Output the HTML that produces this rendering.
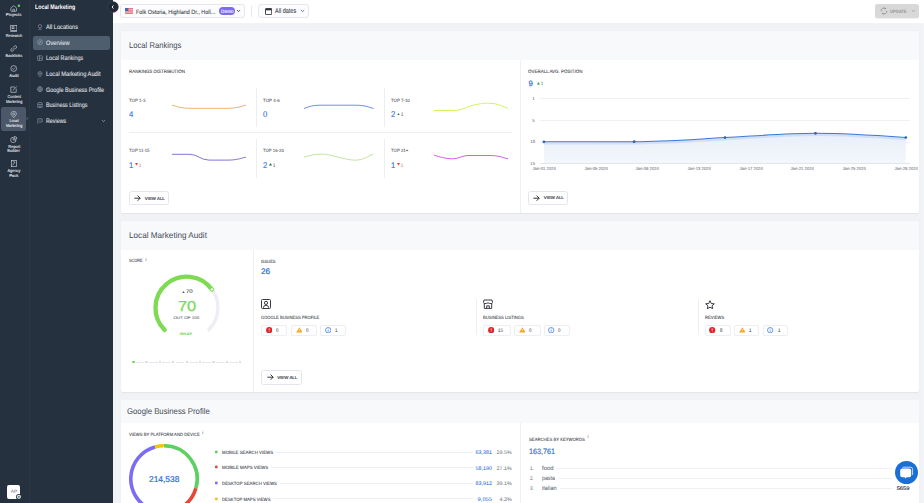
<!DOCTYPE html><html><head><meta charset="utf-8"><style>
html,body{margin:0;padding:0;width:924px;height:503px;overflow:hidden;position:relative;font-family:"Liberation Sans",sans-serif}
.a{position:absolute;white-space:nowrap;line-height:1;text-rendering:geometricPrecision}
</style></head><body>
<div style="position:absolute;left:0px;top:0px;width:924px;height:503px;background:#f0f2f6"></div>
<div style="position:absolute;left:113px;top:0px;width:811px;height:23px;background:#fff"></div>
<div style="position:absolute;left:921.4px;top:23px;width:2.6px;height:480px;background:#f3f4f7"></div>
<div style="position:absolute;left:0px;top:0px;width:29px;height:503px;background:#25313e"></div>
<div style="position:absolute;left:29px;top:0px;width:1.2px;height:503px;background:#2b3543"></div>
<div style="position:absolute;left:30.2px;top:0px;width:82.8px;height:503px;background:#25313e"></div>
<div style="position:absolute;left:1.2px;top:107.1px;width:25px;height:23.9px;background:#4c5869;border-radius:2.5px"></div>
<svg style="position:absolute;left:25.5px;top:116px" width="3" height="5" viewBox="0 0 3 5"><path d="M0.5 0.5 L2.6 2.5 L0.5 4.5 Z" fill="#4c5869"/></svg>
<div class="a" style="left:6.33px;transform-origin:50% 0;transform:scaleX(1.0237);top:13.00px;font-size:4.2px;color:#f4f6fa;font-weight:400;-webkit-text-stroke:0.06px #f4f6fa;">Projects</div>
<div class="a" style="left:4.94px;transform-origin:50% 0;transform:scaleX(0.9151);top:33.70px;font-size:4.2px;color:#f4f6fa;font-weight:400;-webkit-text-stroke:0.06px #f4f6fa;">Research</div>
<div class="a" style="left:5.06px;transform-origin:50% 0;transform:scaleX(0.9385);top:53.80px;font-size:4.2px;color:#f4f6fa;font-weight:400;-webkit-text-stroke:0.06px #f4f6fa;">Backlinks</div>
<div class="a" style="left:9.13px;transform-origin:50% 0;top:74.20px;font-size:4.2px;color:#f4f6fa;font-weight:400;-webkit-text-stroke:0.06px #f4f6fa;">Audit</div>
<div class="a" style="left:6.56px;transform-origin:50% 0;transform:scaleX(0.9201);top:94.60px;font-size:4.2px;color:#f4f6fa;font-weight:400;-webkit-text-stroke:0.06px #f4f6fa;">Content</div>
<div class="a" style="left:4.70px;transform-origin:50% 0;transform:scaleX(0.8972);top:99.50px;font-size:4.2px;color:#f4f6fa;font-weight:400;-webkit-text-stroke:0.06px #f4f6fa;">Marketing</div>
<div class="a" style="left:8.89px;transform-origin:50% 0;transform:scaleX(0.9186);top:119.30px;font-size:4.2px;color:#f4f6fa;font-weight:400;-webkit-text-stroke:0.06px #f4f6fa;">Local</div>
<div class="a" style="left:4.70px;transform-origin:50% 0;transform:scaleX(0.8972);top:123.80px;font-size:4.2px;color:#f4f6fa;font-weight:400;-webkit-text-stroke:0.06px #f4f6fa;">Marketing</div>
<div class="a" style="left:7.61px;transform-origin:50% 0;transform:scaleX(0.9540);top:144.70px;font-size:4.2px;color:#f4f6fa;font-weight:400;-webkit-text-stroke:0.06px #f4f6fa;">Report</div>
<div class="a" style="left:7.38px;transform-origin:50% 0;transform:scaleX(0.9581);top:149.40px;font-size:4.2px;color:#f4f6fa;font-weight:400;-webkit-text-stroke:0.06px #f4f6fa;">Builder</div>
<div class="a" style="left:6.92px;transform-origin:50% 0;transform:scaleX(0.9306);top:169.30px;font-size:4.2px;color:#f4f6fa;font-weight:400;-webkit-text-stroke:0.06px #f4f6fa;">Agency</div>
<div class="a" style="left:9.24px;transform-origin:50% 0;transform:scaleX(0.9664);top:173.70px;font-size:4.2px;color:#f4f6fa;font-weight:400;-webkit-text-stroke:0.06px #f4f6fa;">Pack</div>
<svg style="position:absolute;left:9.9px;top:4.6px" width="7.5" height="7" viewBox="0 0 7.5 7"><path d="M0.9 3.3 Q0.9 2.8 1.3 2.5 L3.2 1 Q3.7 0.6 4.2 1 L6.1 2.5 Q6.5 2.8 6.5 3.3 V5.8 Q6.5 6.3 6 6.3 H1.4 Q0.9 6.3 0.9 5.8 Z" fill="none" stroke="#cfd4dc" stroke-width="0.65"/><path d="M2.9 6.3 V4.6 Q2.9 4.1 3.7 4.1 Q4.5 4.1 4.5 4.6 V6.3" fill="none" stroke="#cfd4dc" stroke-width="0.65"/></svg>
<svg style="position:absolute;left:16px;top:3px" width="6" height="6" viewBox="0 0 6 6"><circle cx="2.9" cy="2.7" r="1.25" fill="#5fcf6a"/></svg>
<svg style="position:absolute;left:9.8px;top:24.8px" width="7.6" height="7" viewBox="0 0 7.6 7"><rect x="0.7" y="0.6" width="6.2" height="4.9" fill="none" stroke="#cfd4dc" stroke-width="0.65"/><path d="M0.2 6.5 H7.4" fill="none" stroke="#cfd4dc" stroke-width="0.65"/><rect x="2.1" y="1.8" width="1.9" height="1.9" fill="none" stroke="#cfd4dc" stroke-width="0.65"/></svg>
<svg style="position:absolute;left:10px;top:45px" width="7.5" height="7" viewBox="0 0 7.5 7"><path d="M3.2 2.4 L4.4 1.1 Q5.4 0.3 6.3 1.1 Q7 2 6.2 3 L5 4.2 M4.2 4.6 L3 5.9 Q2 6.7 1.1 5.9 Q0.4 5 1.2 4 L2.4 2.8 M2.8 4.6 L4.6 2.8" fill="none" stroke="#cfd4dc" stroke-width="0.65"/></svg>
<svg style="position:absolute;left:10px;top:65px" width="7.5" height="7" viewBox="0 0 7.5 7"><circle cx="3.75" cy="3.5" r="2.9" fill="none" stroke="#cfd4dc" stroke-width="0.65"/><path d="M2.4 3.6 L3.4 4.5 L5.1 2.6" fill="none" stroke="#cfd4dc" stroke-width="0.65"/></svg>
<svg style="position:absolute;left:10px;top:86.2px" width="7.5" height="7" viewBox="0 0 7.5 7"><path d="M5 1 H0.8 V6.3 H6.2 V2.6" fill="none" stroke="#cfd4dc" stroke-width="0.65"/><path d="M2.8 4.3 L6.8 0.5" fill="none" stroke="#cfd4dc" stroke-width="0.65"/></svg>
<svg style="position:absolute;left:10px;top:111.2px" width="7.5" height="7" viewBox="0 0 7.5 7"><path d="M3.75 6.6 L1.3 3.7 Q0.4 0.7 3.75 0.4 Q7.1 0.7 6.2 3.7 Z" fill="none" stroke="#cfd4dc" stroke-width="0.65"/><circle cx="3.75" cy="2.9" r="1" fill="none" stroke="#cfd4dc" stroke-width="0.65"/></svg>
<svg style="position:absolute;left:10px;top:136px" width="7.5" height="7" viewBox="0 0 7.5 7"><path d="M3.2 1.2 A2.7 2.7 0 1 0 6 4 H3.2 Z" fill="none" stroke="#cfd4dc" stroke-width="0.65"/><path d="M4.3 0.4 A2.5 2.5 0 0 1 6.9 3 H4.3 Z" fill="none" stroke="#cfd4dc" stroke-width="0.65"/></svg>
<svg style="position:absolute;left:10px;top:160.2px" width="7.5" height="7" viewBox="0 0 7.5 7"><rect x="1.3" y="0.4" width="5" height="6.3" fill="none" stroke="#cfd4dc" stroke-width="0.65"/><path d="M2.5 5.3 L5.1 2.1 M2.8 1.8 H4.8" fill="none" stroke="#cfd4dc" stroke-width="0.65"/></svg>
<div style="position:absolute;left:7.3px;top:485.1px;width:13px;height:13.8px;background:#fff;border-radius:2px"></div>
<div class="a" style="left:10.83px;transform-origin:50% 0;transform:scaleX(1.0748);top:490.14px;font-size:4.6px;color:#7a7592;font-weight:400;font-style:italic-webkit-text-stroke:0.1px #7a7592;">AP</div>
<svg style="position:absolute;left:14.5px;top:493.4px" width="8" height="8" viewBox="0 0 8 8"><circle cx="3.9" cy="3.8" r="2.9" fill="#25303d"/><circle cx="3.9" cy="3.8" r="2.1" fill="#dfe2e7"/><circle cx="3.9" cy="3.8" r="0.9" fill="#5b6470"/></svg>
<div class="a" style="left:34.90px;transform-origin:0 0;transform:scaleX(0.8283);top:5.31px;font-size:6.4px;color:#ffffff;font-weight:700;">Local Marketing</div>
<div style="position:absolute;left:32.8px;top:35.9px;width:77.1px;height:13.9px;background:#4f5e6e;border-radius:2.5px"></div>
<div class="a" style="left:45.70px;transform-origin:0 0;transform:scaleX(0.8682);top:25.13px;font-size:6.5px;color:#e8ebf0;font-weight:400;-webkit-text-stroke:0.05px #e8ebf0;">All Locations</div>
<div class="a" style="left:45.70px;transform-origin:0 0;transform:scaleX(0.8710);top:40.80px;font-size:6.5px;color:#e8ebf0;font-weight:400;-webkit-text-stroke:0.05px #e8ebf0;">Overview</div>
<div class="a" style="left:45.70px;transform-origin:0 0;transform:scaleX(0.8368);top:56.47px;font-size:6.5px;color:#e8ebf0;font-weight:400;-webkit-text-stroke:0.05px #e8ebf0;">Local Rankings</div>
<div class="a" style="left:45.70px;transform-origin:0 0;transform:scaleX(0.8784);top:72.14px;font-size:6.5px;color:#e8ebf0;font-weight:400;-webkit-text-stroke:0.05px #e8ebf0;">Local Marketing Audit</div>
<div class="a" style="left:45.70px;transform-origin:0 0;transform:scaleX(0.8375);top:87.81px;font-size:6.5px;color:#e8ebf0;font-weight:400;-webkit-text-stroke:0.05px #e8ebf0;">Google Business Profile</div>
<div class="a" style="left:45.70px;transform-origin:0 0;transform:scaleX(0.8241);top:103.48px;font-size:6.5px;color:#e8ebf0;font-weight:400;-webkit-text-stroke:0.05px #e8ebf0;">Business Listings</div>
<div class="a" style="left:45.70px;transform-origin:0 0;transform:scaleX(0.8224);top:119.15px;font-size:6.5px;color:#e8ebf0;font-weight:400;-webkit-text-stroke:0.05px #e8ebf0;">Reviews</div>
<svg style="position:absolute;left:36.6px;top:23.70px" width="6" height="6.4" viewBox="0 0 6 6.4"><circle cx="3" cy="2.2" r="1.7" fill="none" stroke="#97a0ac" stroke-width="0.6"/><path d="M3 3.9 V5.6 M1 5.9 H5" fill="none" stroke="#97a0ac" stroke-width="0.6"/></svg>
<svg style="position:absolute;left:36.6px;top:39.37px" width="6" height="6.4" viewBox="0 0 6 6.4"><circle cx="3" cy="3.2" r="2.5" fill="none" stroke="#97a0ac" stroke-width="0.6"/><path d="M1.9 4.3 L2.5 2.6 L4.2 2 L3.6 3.7 Z" fill="none" stroke="#97a0ac" stroke-width="0.6"/></svg>
<svg style="position:absolute;left:36.6px;top:55.04px" width="6" height="6.4" viewBox="0 0 6 6.4"><rect x="0.6" y="0.8" width="4.8" height="4.8" rx="0.6" fill="none" stroke="#97a0ac" stroke-width="0.6"/><path d="M2.4 0.8 V5.6 M2.4 3.2 H5.4" fill="none" stroke="#97a0ac" stroke-width="0.6"/></svg>
<svg style="position:absolute;left:36.6px;top:70.71px" width="6" height="6.4" viewBox="0 0 6 6.4"><path d="M3 6 L1.1 3.4 Q0.4 0.6 3 0.5 Q5.6 0.6 4.9 3.4 Z" fill="none" stroke="#97a0ac" stroke-width="0.6"/><circle cx="3" cy="2.6" r="0.8" fill="none" stroke="#97a0ac" stroke-width="0.6"/></svg>
<svg style="position:absolute;left:36.6px;top:86.38px" width="6" height="6.4" viewBox="0 0 6 6.4"><circle cx="3" cy="3.2" r="2.5" fill="none" stroke="#97a0ac" stroke-width="0.6"/><ellipse cx="3" cy="3.2" rx="1" ry="2.5" fill="none" stroke="#97a0ac" stroke-width="0.6"/><path d="M0.5 3.2 H5.5" fill="none" stroke="#97a0ac" stroke-width="0.6"/></svg>
<svg style="position:absolute;left:36.6px;top:102.05px" width="6" height="6.4" viewBox="0 0 6 6.4"><rect x="0.8" y="0.6" width="4.4" height="5.2" rx="0.6" fill="none" stroke="#97a0ac" stroke-width="0.6"/><path d="M0.8 2.4 H5.2 M2.2 5.8 V4 H3.8 V5.8" fill="none" stroke="#97a0ac" stroke-width="0.6"/></svg>
<svg style="position:absolute;left:36.6px;top:117.72px" width="6" height="6.4" viewBox="0 0 6 6.4"><path d="M0.8 5.6 V0.8 H5.2 V4 H1.8" fill="none" stroke="#97a0ac" stroke-width="0.6"/><path d="M3 1.8 V2.8" fill="none" stroke="#97a0ac" stroke-width="0.6"/></svg>
<svg style="position:absolute;left:101.3px;top:118.6px" width="5" height="4" viewBox="0 0 5 4"><path d="M0.8 1 L2.5 2.6 L4.2 1" fill="none" stroke="#a9b1bd" stroke-width="0.7"/></svg>
<div style="position:absolute;left:107.7px;top:1.6px;width:10px;height:10px;border-radius:50%;background:#202a36;box-shadow:0 0 0 0.7px #3a4453"></div>
<svg style="position:absolute;left:109.6px;top:3.6px" width="6" height="6" viewBox="0 0 6 6"><path d="M3.4 1.4 L2.1 3 L3.4 4.6" fill="none" stroke="#ffffff" stroke-width="0.9"/></svg>
<div style="position:absolute;left:120.0px;top:4.2px;width:125.4px;height:14.1px;background:#fcfcfe;border:0.7px solid #e4e7ee;border-radius:3px;box-sizing:border-box"></div>
<svg style="position:absolute;left:125px;top:8px" width="8" height="6" viewBox="0 0 8 6"><rect width="8" height="6" fill="#e46e76"/><rect y="0.9" width="8" height="0.85" fill="#f2c0c4"/><rect y="2.6" width="8" height="0.85" fill="#f2c0c4"/><rect y="4.3" width="8" height="0.85" fill="#f2c0c4"/><rect width="3.4" height="3" fill="#5861b3"/></svg>
<div class="a" style="left:135.60px;transform-origin:0 0;transform:scaleX(0.8791);top:9.85px;font-size:6.2px;color:#3a3e48;font-weight:400;-webkit-text-stroke:0.08px #3a3e48;">Folk Ostoria, Highland Dr., Holl...</div>
<div style="position:absolute;left:219px;top:7.3px;width:15.8px;height:7.5px;background:#7c6cf0;border-radius:4px"></div>
<div class="a" style="left:221.00px;transform-origin:50% 0;transform:scaleX(0.9846);top:11.10px;font-size:4.8px;color:#ffffff;font-weight:400;-webkit-text-stroke:0.1px #ffffff;">Demo</div>
<svg style="position:absolute;left:235.8px;top:8.9px" width="5" height="4" viewBox="0 0 5 4"><path d="M1 1.1 L2.5 2.6 L4 1.1" fill="none" stroke="#30343e" stroke-width="0.9"/></svg>
<div style="position:absolute;left:251.2px;top:5.6px;width:0.8px;height:11.3px;background:#e4e7ee"></div>
<div style="position:absolute;left:258.2px;top:4.2px;width:51.3px;height:14.2px;background:#fcfcfe;border:0.7px solid #e4e7ee;border-radius:3px;box-sizing:border-box"></div>
<svg style="position:absolute;left:264.8px;top:8px" width="7.2" height="7" viewBox="0 0 7.2 7"><rect x="0.5" y="0.6" width="6.2" height="6" rx="0.6" fill="none" stroke="#2b2f38" stroke-width="0.9"/><rect x="0.5" y="0.6" width="6.2" height="1.7" fill="#2b2f38"/></svg>
<div class="a" style="left:274.90px;transform-origin:0 0;transform:scaleX(0.8129);top:8.98px;font-size:6.8px;color:#3a3e48;font-weight:400;-webkit-text-stroke:0.08px #3a3e48;">All dates</div>
<svg style="position:absolute;left:300.2px;top:9px" width="5" height="4" viewBox="0 0 5 4"><path d="M0.8 1 L2.5 2.6 L4.2 1" fill="none" stroke="#454956" stroke-width="0.7"/></svg>
<div style="position:absolute;left:875.2px;top:4.4px;width:44.2px;height:13.8px;background:#d8d8d8;border-radius:2.5px;box-shadow:0 0.5px 1px rgba(0,0,0,0.06)"></div>
<svg style="position:absolute;left:879.6px;top:7.2px" width="8" height="8" viewBox="0 0 8 8"><path d="M1.1 4.2 A2.9 2.9 0 0 1 5.6 1.5 M6.9 3.8 A2.9 2.9 0 0 1 2.4 6.5" fill="none" stroke="#8c8c8c" stroke-width="0.85"/><path d="M4.6 0.6 L6.2 1.4 L4.8 2.6 Z M3.4 7.4 L1.8 6.6 L3.2 5.4 Z" fill="#8c8c8c"/></svg>
<div class="a" style="left:890.30px;transform-origin:0 0;transform:scaleX(0.8568);top:11.31px;font-size:4.8px;color:#9c9c9c;font-weight:700;-webkit-text-stroke:0.1px #9c9c9c;">UPDATE</div>
<svg style="position:absolute;left:910.5px;top:9.3px" width="5" height="4" viewBox="0 0 5 4"><path d="M0.8 1 L2.5 2.6 L4.2 1" fill="none" stroke="#9c9c9c" stroke-width="0.7"/></svg>
<div style="position:absolute;left:121px;top:30.5px;width:798.4px;height:182.3px;background:#fff;border-radius:2px;box-shadow:0 0.6px 1px rgba(30,40,60,0.06)"></div>
<div style="position:absolute;left:121px;top:30.5px;width:798.4px;height:29.5px;background:#f8f9fb;border-radius:2px 2px 0 0"></div>
<div class="a" style="left:128.70px;transform-origin:0 0;transform:scaleX(0.9150);top:40.87px;font-size:8.4px;color:#474b57;font-weight:400;">Local Rankings</div>
<div style="position:absolute;left:520px;top:60px;width:0.8px;height:153px;background:#eef0f4"></div>
<div class="a" style="left:129.00px;transform-origin:0 0;transform:scaleX(0.9297);top:70.90px;font-size:4.8px;color:#30343e;font-weight:400;-webkit-text-stroke:0.06px #30343e;">RANKINGS DISTRIBUTION</div>
<div style="position:absolute;left:129px;top:132.4px;width:383.3px;height:0.8px;background:#eceef3"></div>
<div style="position:absolute;left:256.4px;top:88.4px;width:0.8px;height:38.9px;background:#eceef3"></div>
<div style="position:absolute;left:256.4px;top:138.5px;width:0.8px;height:39.3px;background:#eceef3"></div>
<div style="position:absolute;left:384.0px;top:88.4px;width:0.8px;height:38.9px;background:#eceef3"></div>
<div style="position:absolute;left:384.0px;top:138.5px;width:0.8px;height:39.3px;background:#eceef3"></div>
<div class="a" style="left:129.20px;transform-origin:0 0;transform:scaleX(0.9439);top:98.87px;font-size:4.65px;color:#353944;font-weight:400;-webkit-text-stroke:0.02px #353944;">TOP 1-3</div>
<div class="a" style="left:129.00px;transform-origin:0 0;transform:scaleX(0.9200);top:110.21px;font-size:8.3px;color:#2f6fd6;font-weight:400;-webkit-text-stroke:0.12px #2f6fd6;">4</div>
<div class="a" style="left:263.20px;transform-origin:0 0;transform:scaleX(0.9554);top:98.87px;font-size:4.65px;color:#353944;font-weight:400;-webkit-text-stroke:0.02px #353944;">TOP 4-6</div>
<div class="a" style="left:263.00px;transform-origin:0 0;transform:scaleX(0.9200);top:110.21px;font-size:8.3px;color:#2f6fd6;font-weight:400;-webkit-text-stroke:0.12px #2f6fd6;">0</div>
<div class="a" style="left:391.20px;transform-origin:0 0;transform:scaleX(0.9422);top:98.87px;font-size:4.65px;color:#353944;font-weight:400;-webkit-text-stroke:0.02px #353944;">TOP 7-10</div>
<div class="a" style="left:391.00px;transform-origin:0 0;transform:scaleX(0.9200);top:110.21px;font-size:8.3px;color:#2f6fd6;font-weight:400;-webkit-text-stroke:0.12px #2f6fd6;">2</div>
<svg style="position:absolute;left:396.60px;top:112.70px" width="3" height="2.6" viewBox="0 0 3 2.6"><path d="M0 2.6 L1.5 0 L3 2.6 Z" fill="#1f6e45"/></svg>
<div class="a" style="left:401.30px;transform-origin:0 0;transform:scaleX(0.8000);top:113.15px;font-size:5.0px;color:#4f535c;font-weight:400;-webkit-text-stroke:0.06px #4f535c;">1</div>
<div class="a" style="left:129.20px;transform-origin:0 0;transform:scaleX(0.9239);top:149.47px;font-size:4.65px;color:#353944;font-weight:400;-webkit-text-stroke:0.02px #353944;">TOP 11-15</div>
<div class="a" style="left:129.00px;transform-origin:0 0;transform:scaleX(0.9200);top:160.81px;font-size:8.3px;color:#2f6fd6;font-weight:400;-webkit-text-stroke:0.12px #2f6fd6;">1</div>
<svg style="position:absolute;left:134.60px;top:163.30px" width="3" height="2.6" viewBox="0 0 3 2.6"><path d="M0 0 L1.5 2.6 L3 0 Z" fill="#e23a3d"/></svg>
<div class="a" style="left:139.30px;transform-origin:0 0;transform:scaleX(0.8000);top:163.75px;font-size:5.0px;color:#ea6b6e;font-weight:400;-webkit-text-stroke:0.06px #ea6b6e;">1</div>
<div class="a" style="left:263.20px;transform-origin:0 0;transform:scaleX(0.9232);top:149.47px;font-size:4.65px;color:#353944;font-weight:400;-webkit-text-stroke:0.02px #353944;">TOP 16-20</div>
<div class="a" style="left:263.00px;transform-origin:0 0;transform:scaleX(0.9200);top:160.81px;font-size:8.3px;color:#2f6fd6;font-weight:400;-webkit-text-stroke:0.12px #2f6fd6;">2</div>
<svg style="position:absolute;left:268.60px;top:163.30px" width="3" height="2.6" viewBox="0 0 3 2.6"><path d="M0 2.6 L1.5 0 L3 2.6 Z" fill="#1f6e45"/></svg>
<div class="a" style="left:273.30px;transform-origin:0 0;transform:scaleX(0.8000);top:163.75px;font-size:5.0px;color:#4f535c;font-weight:400;-webkit-text-stroke:0.06px #4f535c;">1</div>
<div class="a" style="left:391.20px;transform-origin:0 0;transform:scaleX(0.9274);top:149.47px;font-size:4.65px;color:#353944;font-weight:400;-webkit-text-stroke:0.02px #353944;">TOP 21+</div>
<div class="a" style="left:391.00px;transform-origin:0 0;transform:scaleX(0.9200);top:160.81px;font-size:8.3px;color:#2f6fd6;font-weight:400;-webkit-text-stroke:0.12px #2f6fd6;">1</div>
<svg style="position:absolute;left:396.60px;top:163.30px" width="3" height="2.6" viewBox="0 0 3 2.6"><path d="M0 0 L1.5 2.6 L3 0 Z" fill="#e23a3d"/></svg>
<div class="a" style="left:401.30px;transform-origin:0 0;transform:scaleX(0.8000);top:163.75px;font-size:5.0px;color:#ea6b6e;font-weight:400;-webkit-text-stroke:0.06px #ea6b6e;">1</div>
<svg style="position:absolute;left:0;top:0" width="924" height="503" viewBox="0 0 924 503"><path d="M172.4 105.2 C179 107.3 183 108.3 190 108.3 L228 108.3 C235 108.3 239 107.3 245.6 105.2" fill="none" stroke="#e9a55a" stroke-width="0.85" stroke-linecap="round"/></svg>
<svg style="position:absolute;left:0;top:0" width="924" height="503" viewBox="0 0 924 503"><path d="M304.3 108.4 C310 106.3 313 105.2 320 105.2 L356 105.2 C363 105.2 367 106.3 373.2 108.4" fill="none" stroke="#4c7ef0" stroke-width="0.85" stroke-linecap="round"/></svg>
<svg style="position:absolute;left:0;top:0" width="924" height="503" viewBox="0 0 924 503"><path d="M434.4 110.5 L453 110.5 C462 110.5 466 107 474 105 C481 103.5 484 103.2 489 103.2 C496 103.2 501 105.3 507.6 108.3" fill="none" stroke="#c9f241" stroke-width="0.85" stroke-linecap="round"/></svg>
<svg style="position:absolute;left:0;top:0" width="924" height="503" viewBox="0 0 924 503"><path d="M172.4 154.3 L190 154.3 C197 154.3 201 160.1 209 160.1 L228 160.1 C236 160.1 240 158.6 245.6 157.2" fill="none" stroke="#6d5ccc" stroke-width="0.85" stroke-linecap="round"/></svg>
<svg style="position:absolute;left:0;top:0" width="924" height="503" viewBox="0 0 924 503"><path d="M304.3 157.1 C311 155.2 315 154.1 321.6 154.1 C331 154.1 345 160.2 355.4 160.2 C362 160.2 367 157 373.2 154.1" fill="none" stroke="#b8e08f" stroke-width="0.85" stroke-linecap="round"/></svg>
<svg style="position:absolute;left:0;top:0" width="924" height="503" viewBox="0 0 924 503"><path d="M434.4 155.2 C441 157.4 446 158.8 452.6 158.8 C459 158.8 462 155.5 468 155.5 L491 155.5 C498 155.5 502 157.3 507.6 158.8" fill="none" stroke="#c945e8" stroke-width="0.85" stroke-linecap="round"/></svg>
<div style="position:absolute;left:129px;top:191px;width:40.2px;height:14.3px;background:#fff;border:0.8px solid #e3e6ee;border-radius:2.5px;box-sizing:border-box"></div>
<svg style="position:absolute;left:134.20px;top:194.90px" width="7" height="6.4" viewBox="0 0 7 6.4"><path d="M0.4 3.2 H6.2 M3.6 0.6 L6.2 3.2 L3.6 5.8" fill="none" stroke="#1f232b" stroke-width="0.9"/></svg>
<div class="a" style="left:144.80px;transform-origin:0 0;top:196.61px;font-size:4.4px;color:#30343e;font-weight:400;-webkit-text-stroke:0.14px #30343e;">VIEW ALL</div>
<div style="position:absolute;left:528px;top:190.7px;width:40.2px;height:14.3px;background:#fff;border:0.8px solid #e3e6ee;border-radius:2.5px;box-sizing:border-box"></div>
<svg style="position:absolute;left:533.20px;top:194.60px" width="7" height="6.4" viewBox="0 0 7 6.4"><path d="M0.4 3.2 H6.2 M3.6 0.6 L6.2 3.2 L3.6 5.8" fill="none" stroke="#1f232b" stroke-width="0.9"/></svg>
<div class="a" style="left:543.80px;transform-origin:0 0;top:196.31px;font-size:4.4px;color:#30343e;font-weight:400;-webkit-text-stroke:0.14px #30343e;">VIEW ALL</div>
<div class="a" style="left:528.40px;transform-origin:0 0;transform:scaleX(0.9317);top:70.90px;font-size:4.8px;color:#30343e;font-weight:400;-webkit-text-stroke:0.06px #30343e;">OVERALL AVG. POSITION</div>
<div class="a" style="left:528.50px;transform-origin:0 0;top:80.36px;font-size:7.8px;color:#2f6fd6;font-weight:400;-webkit-text-stroke:0.2px #2f6fd6;">9</div>
<svg style="position:absolute;left:536.6px;top:82.4px" width="3" height="2.6" viewBox="0 0 3 2.6"><path d="M0 2.6 L1.5 0 L3 2.6 Z" fill="#2e9e4f"/></svg>
<div class="a" style="left:540.60px;transform-origin:0 0;transform:scaleX(0.8500);top:82.14px;font-size:4.6px;color:#2e7d4a;font-weight:400;-webkit-text-stroke:0.06px #2e7d4a;">1</div>
<div style="position:absolute;left:540.3px;top:98.3px;width:369.4px;height:0.7px;background:#eef0f3"></div>
<div style="position:absolute;left:540.3px;top:120.0px;width:369.4px;height:0.7px;background:#eef0f3"></div>
<div style="position:absolute;left:540.3px;top:141.5px;width:369.4px;height:0.7px;background:#eef0f3"></div>
<div style="position:absolute;left:540.3px;top:163.0px;width:369.4px;height:0.8px;background:#e2e5eb"></div>
<div class="a" style="right:389.00px;transform-origin:100% 0;transform:scaleX(0.9500);top:97.15px;font-size:4.5px;color:#6d717b;font-weight:400;-webkit-text-stroke:0.06px #6d717b;">1</div>
<div class="a" style="right:389.00px;transform-origin:100% 0;transform:scaleX(0.9500);top:118.85px;font-size:4.5px;color:#6d717b;font-weight:400;-webkit-text-stroke:0.06px #6d717b;">5</div>
<div class="a" style="right:389.00px;transform-origin:100% 0;transform:scaleX(0.9500);top:140.35px;font-size:4.5px;color:#6d717b;font-weight:400;-webkit-text-stroke:0.06px #6d717b;">10</div>
<div class="a" style="right:389.00px;transform-origin:100% 0;transform:scaleX(0.9500);top:161.55px;font-size:4.5px;color:#6d717b;font-weight:400;-webkit-text-stroke:0.06px #6d717b;">15</div>
<div class="a" style="left:531.79px;transform-origin:50% 0;transform:scaleX(0.9582);top:167.21px;font-size:4.4px;color:#6d717b;font-weight:400;-webkit-text-stroke:0.06px #6d717b;">Jan-01 2024</div>
<div class="a" style="left:583.69px;transform-origin:50% 0;transform:scaleX(0.9582);top:167.21px;font-size:4.4px;color:#6d717b;font-weight:400;-webkit-text-stroke:0.06px #6d717b;">Jan-05 2024</div>
<div class="a" style="left:635.29px;transform-origin:50% 0;transform:scaleX(0.9582);top:167.21px;font-size:4.4px;color:#6d717b;font-weight:400;-webkit-text-stroke:0.06px #6d717b;">Jan-09 2024</div>
<div class="a" style="left:686.79px;transform-origin:50% 0;transform:scaleX(0.9582);top:167.21px;font-size:4.4px;color:#6d717b;font-weight:400;-webkit-text-stroke:0.06px #6d717b;">Jan-13 2024</div>
<div class="a" style="left:738.79px;transform-origin:50% 0;transform:scaleX(0.9582);top:167.21px;font-size:4.4px;color:#6d717b;font-weight:400;-webkit-text-stroke:0.06px #6d717b;">Jan-17 2024</div>
<div class="a" style="left:790.29px;transform-origin:50% 0;transform:scaleX(0.9582);top:167.21px;font-size:4.4px;color:#6d717b;font-weight:400;-webkit-text-stroke:0.06px #6d717b;">Jan-21 2024</div>
<div class="a" style="left:841.99px;transform-origin:50% 0;transform:scaleX(0.9582);top:167.21px;font-size:4.4px;color:#6d717b;font-weight:400;-webkit-text-stroke:0.06px #6d717b;">Jan-25 2024</div>
<div class="a" style="left:893.59px;transform-origin:50% 0;transform:scaleX(0.9582);top:167.21px;font-size:4.4px;color:#6d717b;font-weight:400;-webkit-text-stroke:0.06px #6d717b;">Jan-29 2024</div>
<svg style="position:absolute;left:0;top:0" width="924" height="503" viewBox="0 0 924 503">
<defs><linearGradient id="ga" x1="0" y1="0" x2="0" y2="1"><stop offset="0" stop-color="#e8eff9"/><stop offset="1" stop-color="#f4f7fc"/></linearGradient></defs>
<path d="M543.9 141.8 C574 141.8 604 141.7 634.1 141.7 C664 141.7 695 139.2 725 137.6 C755 136 785 133.3 815.5 133.3 C845 133.3 876 135.4 905.8 137.5 L905.8 163 L543.9 163 Z" fill="url(#ga)"/>
<path d="M543.9 141.8 C574 141.8 604 141.7 634.1 141.7 C664 141.7 695 139.2 725 137.6 C755 136 785 133.3 815.5 133.3 C845 133.3 876 135.4 905.8 137.5" fill="none" stroke="#2f6fd6" stroke-opacity="0.13" stroke-width="2.4" transform="translate(0,1.6)"/>
<path d="M543.9 141.8 C574 141.8 604 141.7 634.1 141.7 C664 141.7 695 139.2 725 137.6 C755 136 785 133.3 815.5 133.3 C845 133.3 876 135.4 905.8 137.5" fill="none" stroke="#3579da" stroke-width="1.05"/>
<circle cx="543.9" cy="141.8" r="1.35" fill="#1f63cc"/><circle cx="634.1" cy="141.7" r="1.35" fill="#1f63cc"/><circle cx="725" cy="137.6" r="1.35" fill="#1f63cc"/><circle cx="815.5" cy="133.3" r="1.35" fill="#1f63cc"/><circle cx="905.8" cy="137.5" r="1.35" fill="#1f63cc"/></svg>
<div style="position:absolute;left:121px;top:220.5px;width:798.4px;height:171.5px;background:#fff;border-radius:2px;box-shadow:0 0.6px 1px rgba(30,40,60,0.06)"></div>
<div style="position:absolute;left:121px;top:220.5px;width:798.4px;height:29.5px;background:#f8f9fb;border-radius:2px 2px 0 0"></div>
<div class="a" style="left:128.70px;transform-origin:0 0;transform:scaleX(0.9728);top:230.87px;font-size:8.4px;color:#474b57;font-weight:400;">Local Marketing Audit</div>
<div style="position:absolute;left:253.2px;top:250px;width:0.8px;height:142px;background:#eef0f4"></div>
<div class="a" style="left:128.50px;transform-origin:0 0;transform:scaleX(0.8295);top:258.77px;font-size:4.65px;color:#30343e;font-weight:400;-webkit-text-stroke:0.06px #30343e;">SCORE</div>
<div class="a" style="left:145.40px;transform-origin:0 0;top:257.61px;font-size:4.4px;color:#30343e;font-weight:400;font-style:italic-webkit-text-stroke:0.06px #30343e;">i</div>
<svg style="position:absolute;left:0;top:0" width="924" height="503" viewBox="0 0 924 503">
<path d="M164.64 329.86 A31.2 31.2 0 1 1 208.76 329.86" fill="none" stroke="#eceef4" stroke-width="3.4" stroke-linecap="round"/>
<path d="M164.64 329.86 A31.2 31.2 0 1 1 211.94 289.46" fill="none" stroke="#7ddb52" stroke-width="4.3" stroke-linecap="round"/>
<circle cx="211.94" cy="289.46" r="1.7" fill="#fff" stroke="#7fdc4f" stroke-width="0.9"/>
</svg>
<svg style="position:absolute;left:181.8px;top:290.5px" width="3" height="2.4" viewBox="0 0 3 2.4"><path d="M0 2.4 L1.5 0 L3 2.4 Z" fill="#2b7a4b"/></svg>
<div class="a" style="left:185.50px;transform-origin:0 0;transform:scaleX(1.1589);top:290.49px;font-size:5.2px;color:#2f333c;font-weight:400;-webkit-text-stroke:0.06px #2f333c;">70</div>
<div class="a" style="left:178.73px;transform-origin:50% 0;transform:scaleX(1.1338);top:299.98px;font-size:14.5px;color:#7ddb52;font-weight:400;-webkit-text-stroke:0.25px #7ddb52;">70</div>
<div class="a" style="left:175.49px;transform-origin:50% 0;transform:scaleX(1.1302);top:315.77px;font-size:4.0px;color:#5b606b;font-weight:400;-webkit-text-stroke:0.06px #5b606b;">OUT OF 100</div>
<div class="a" style="left:181.47px;transform-origin:50% 0;transform:scaleX(1.2323);top:332.81px;font-size:3.6px;color:#6fd44a;font-weight:700;-webkit-text-stroke:0.05px #6fd44a;">OKAY</div>
<div style="position:absolute;left:135.4px;top:361.9px;width:8.969999999999999px;height:0.7px;background:#e6e8ee"></div>
<div style="position:absolute;left:131.80px;top:360.7px;width:2.8px;height:2.8px;border-radius:50%;background:#74d94a"></div>
<div style="position:absolute;left:148.77px;top:361.9px;width:8.969999999999999px;height:0.7px;background:#e6e8ee"></div>
<div style="position:absolute;left:145.47px;top:361.1px;width:2.2px;height:2.2px;border-radius:50%;background:#e9ebf0;box-shadow:inset 0 0 0 0.5px #cfd3db"></div>
<div style="position:absolute;left:162.14px;top:361.9px;width:8.969999999999999px;height:0.7px;background:#e6e8ee"></div>
<div style="position:absolute;left:158.84px;top:361.1px;width:2.2px;height:2.2px;border-radius:50%;background:#e9ebf0;box-shadow:inset 0 0 0 0.5px #cfd3db"></div>
<div style="position:absolute;left:175.51px;top:361.9px;width:8.969999999999999px;height:0.7px;background:#e6e8ee"></div>
<div style="position:absolute;left:172.21px;top:361.1px;width:2.2px;height:2.2px;border-radius:50%;background:#e9ebf0;box-shadow:inset 0 0 0 0.5px #cfd3db"></div>
<div style="position:absolute;left:188.88px;top:361.9px;width:8.969999999999999px;height:0.7px;background:#e6e8ee"></div>
<div style="position:absolute;left:185.58px;top:361.1px;width:2.2px;height:2.2px;border-radius:50%;background:#e9ebf0;box-shadow:inset 0 0 0 0.5px #cfd3db"></div>
<div style="position:absolute;left:202.25px;top:361.9px;width:8.969999999999999px;height:0.7px;background:#e6e8ee"></div>
<div style="position:absolute;left:198.95px;top:361.1px;width:2.2px;height:2.2px;border-radius:50%;background:#e9ebf0;box-shadow:inset 0 0 0 0.5px #cfd3db"></div>
<div style="position:absolute;left:215.62px;top:361.9px;width:8.969999999999999px;height:0.7px;background:#e6e8ee"></div>
<div style="position:absolute;left:212.32px;top:361.1px;width:2.2px;height:2.2px;border-radius:50%;background:#e9ebf0;box-shadow:inset 0 0 0 0.5px #cfd3db"></div>
<div style="position:absolute;left:228.99px;top:361.9px;width:8.969999999999999px;height:0.7px;background:#e6e8ee"></div>
<div style="position:absolute;left:225.69px;top:361.1px;width:2.2px;height:2.2px;border-radius:50%;background:#e9ebf0;box-shadow:inset 0 0 0 0.5px #cfd3db"></div>
<div style="position:absolute;left:239.06px;top:361.1px;width:2.2px;height:2.2px;border-radius:50%;background:#e9ebf0;box-shadow:inset 0 0 0 0.5px #cfd3db"></div>
<div class="a" style="left:261.30px;transform-origin:0 0;transform:scaleX(0.8514);top:259.77px;font-size:4.65px;color:#30343e;font-weight:400;-webkit-text-stroke:0.06px #30343e;">ISSUES</div>
<div class="a" style="left:261.10px;transform-origin:0 0;transform:scaleX(1.0205);top:267.57px;font-size:8.1px;color:#2f6fd6;font-weight:400;-webkit-text-stroke:0.2px #2f6fd6;">26</div>
<svg style="position:absolute;left:261px;top:299px" width="10" height="10" viewBox="0 0 10 10"><rect x="0.5" y="0.5" width="9" height="9" rx="1" fill="none" stroke="#2e323b" stroke-width="0.95"/><circle cx="5" cy="3.9" r="1.6" fill="none" stroke="#2e323b" stroke-width="0.95"/><path d="M2.2 8.8 Q2.6 6.3 5 6.2 Q7.4 6.3 7.8 8.8" fill="none" stroke="#2e323b" stroke-width="0.95"/></svg>
<div class="a" style="left:261.30px;transform-origin:0 0;transform:scaleX(0.8829);top:315.57px;font-size:4.65px;color:#30343e;font-weight:400;-webkit-text-stroke:0.06px #30343e;">GOOGLE BUSINESS PROFILE</div>
<div style="position:absolute;left:261.3px;top:324.6px;width:26.1px;height:11px;background:#fff;border:0.8px solid #eceef3;border-radius:2px;box-sizing:border-box"></div>
<svg style="position:absolute;left:265.90px;top:326.8px" width="6.4" height="6.4" viewBox="0 0 6.4 6.4"><circle cx="3.2" cy="3.2" r="3.1" fill="#e2252b"/><path d="M3.2 1.4 V3.6" stroke="#fff" stroke-width="0.7"/><circle cx="3.2" cy="4.8" r="0.4" fill="#fff"/></svg>
<div class="a" style="left:276.10px;transform-origin:0 0;transform:scaleX(0.8500);top:328.89px;font-size:5.2px;color:#4a4e59;font-weight:400;-webkit-text-stroke:0.06px #4a4e59;">0</div>
<div style="position:absolute;left:291.3px;top:324.6px;width:25.4px;height:11px;background:#fff;border:0.8px solid #eceef3;border-radius:2px;box-sizing:border-box"></div>
<svg style="position:absolute;left:295.70px;top:327.2px" width="6.8" height="5.8" viewBox="0 0 6.8 5.8"><path d="M3.4 0.2 L6.7 5.6 H0.1 Z" fill="#f5a623"/><path d="M3.4 2 V3.9" stroke="#fff" stroke-width="0.6"/></svg>
<div class="a" style="left:306.10px;transform-origin:0 0;transform:scaleX(0.8500);top:328.89px;font-size:5.2px;color:#4a4e59;font-weight:400;-webkit-text-stroke:0.06px #4a4e59;">0</div>
<div style="position:absolute;left:320.3px;top:324.6px;width:25.3px;height:11px;background:#fff;border:0.8px solid #eceef3;border-radius:2px;box-sizing:border-box"></div>
<svg style="position:absolute;left:324.90px;top:326.8px" width="6.4" height="6.4" viewBox="0 0 6.4 6.4"><circle cx="3.2" cy="3.2" r="2.7" fill="none" stroke="#3f7fe3" stroke-width="0.8"/><path d="M3.2 2.6 V4.8" stroke="#3f7fe3" stroke-width="0.7"/><circle cx="3.2" cy="1.8" r="0.35" fill="#3f7fe3"/></svg>
<div class="a" style="left:335.10px;transform-origin:0 0;transform:scaleX(0.8500);top:328.89px;font-size:5.2px;color:#4a4e59;font-weight:400;-webkit-text-stroke:0.06px #4a4e59;">1</div>
<div style="position:absolute;left:476.2px;top:299.2px;width:0.8px;height:36.3px;background:#eceef3"></div>
<svg style="position:absolute;left:483px;top:299.2px" width="10" height="10" viewBox="0 0 10 10"><path d="M1 1 H9 L9.6 3.6 Q9.2 4.6 8 4.6 Q6.4 4.6 5 3.8 Q3.6 4.6 2 4.6 Q0.8 4.6 0.4 3.6 Z" fill="none" stroke="#2e323b" stroke-width="0.95"/><path d="M1.3 4.5 V9.4 H8.7 V4.5 M3.7 9.4 V6.8 H6.3 V9.4" fill="none" stroke="#2e323b" stroke-width="0.95"/></svg>
<div class="a" style="left:483.00px;transform-origin:0 0;transform:scaleX(0.8888);top:315.57px;font-size:4.65px;color:#30343e;font-weight:400;-webkit-text-stroke:0.06px #30343e;">BUSINESS LISTINGS</div>
<div style="position:absolute;left:483.2px;top:324.6px;width:27.4px;height:11px;background:#fff;border:0.8px solid #eceef3;border-radius:2px;box-sizing:border-box"></div>
<svg style="position:absolute;left:487.80px;top:326.8px" width="6.4" height="6.4" viewBox="0 0 6.4 6.4"><circle cx="3.2" cy="3.2" r="3.1" fill="#e2252b"/><path d="M3.2 1.4 V3.6" stroke="#fff" stroke-width="0.7"/><circle cx="3.2" cy="4.8" r="0.4" fill="#fff"/></svg>
<div class="a" style="left:498.00px;transform-origin:0 0;transform:scaleX(0.8500);top:328.89px;font-size:5.2px;color:#4a4e59;font-weight:400;-webkit-text-stroke:0.06px #4a4e59;">15</div>
<div style="position:absolute;left:514.2px;top:324.6px;width:26.4px;height:11px;background:#fff;border:0.8px solid #eceef3;border-radius:2px;box-sizing:border-box"></div>
<svg style="position:absolute;left:518.60px;top:327.2px" width="6.8" height="5.8" viewBox="0 0 6.8 5.8"><path d="M3.4 0.2 L6.7 5.6 H0.1 Z" fill="#f5a623"/><path d="M3.4 2 V3.9" stroke="#fff" stroke-width="0.6"/></svg>
<div class="a" style="left:529.00px;transform-origin:0 0;transform:scaleX(0.8500);top:328.89px;font-size:5.2px;color:#4a4e59;font-weight:400;-webkit-text-stroke:0.06px #4a4e59;">0</div>
<div style="position:absolute;left:543.6px;top:324.6px;width:26.4px;height:11px;background:#fff;border:0.8px solid #eceef3;border-radius:2px;box-sizing:border-box"></div>
<svg style="position:absolute;left:548.20px;top:326.8px" width="6.4" height="6.4" viewBox="0 0 6.4 6.4"><circle cx="3.2" cy="3.2" r="2.7" fill="none" stroke="#3f7fe3" stroke-width="0.8"/><path d="M3.2 2.6 V4.8" stroke="#3f7fe3" stroke-width="0.7"/><circle cx="3.2" cy="1.8" r="0.35" fill="#3f7fe3"/></svg>
<div class="a" style="left:558.40px;transform-origin:0 0;transform:scaleX(0.8500);top:328.89px;font-size:5.2px;color:#4a4e59;font-weight:400;-webkit-text-stroke:0.06px #4a4e59;">0</div>
<div style="position:absolute;left:697.8px;top:299.2px;width:0.8px;height:36.3px;background:#eceef3"></div>
<svg style="position:absolute;left:704.7px;top:299.9px" width="10" height="9.6" viewBox="0 0 10 9.6"><path d="M5 0.7 L6.3 3.5 L9.3 3.8 L7 5.8 L7.7 8.8 L5 7.2 L2.3 8.8 L3 5.8 L0.7 3.8 L3.7 3.5 Z" fill="none" stroke="#2e323b" stroke-width="0.95" stroke-linejoin="round"/></svg>
<div class="a" style="left:704.90px;transform-origin:0 0;transform:scaleX(0.8969);top:315.57px;font-size:4.65px;color:#30343e;font-weight:400;-webkit-text-stroke:0.06px #30343e;">REVIEWS</div>
<div style="position:absolute;left:704.8px;top:324.6px;width:26px;height:11px;background:#fff;border:0.8px solid #eceef3;border-radius:2px;box-sizing:border-box"></div>
<svg style="position:absolute;left:709.40px;top:326.8px" width="6.4" height="6.4" viewBox="0 0 6.4 6.4"><circle cx="3.2" cy="3.2" r="3.1" fill="#e2252b"/><path d="M3.2 1.4 V3.6" stroke="#fff" stroke-width="0.7"/><circle cx="3.2" cy="4.8" r="0.4" fill="#fff"/></svg>
<div class="a" style="left:719.60px;transform-origin:0 0;transform:scaleX(0.8500);top:328.89px;font-size:5.2px;color:#4a4e59;font-weight:400;-webkit-text-stroke:0.06px #4a4e59;">8</div>
<div style="position:absolute;left:734.2px;top:324.6px;width:24.8px;height:11px;background:#fff;border:0.8px solid #eceef3;border-radius:2px;box-sizing:border-box"></div>
<svg style="position:absolute;left:738.60px;top:327.2px" width="6.8" height="5.8" viewBox="0 0 6.8 5.8"><path d="M3.4 0.2 L6.7 5.6 H0.1 Z" fill="#f5a623"/><path d="M3.4 2 V3.9" stroke="#fff" stroke-width="0.6"/></svg>
<div class="a" style="left:749.00px;transform-origin:0 0;transform:scaleX(0.8500);top:328.89px;font-size:5.2px;color:#4a4e59;font-weight:400;-webkit-text-stroke:0.06px #4a4e59;">1</div>
<div style="position:absolute;left:762.7px;top:324.6px;width:25.3px;height:11px;background:#fff;border:0.8px solid #eceef3;border-radius:2px;box-sizing:border-box"></div>
<svg style="position:absolute;left:767.30px;top:326.8px" width="6.4" height="6.4" viewBox="0 0 6.4 6.4"><circle cx="3.2" cy="3.2" r="2.7" fill="none" stroke="#3f7fe3" stroke-width="0.8"/><path d="M3.2 2.6 V4.8" stroke="#3f7fe3" stroke-width="0.7"/><circle cx="3.2" cy="1.8" r="0.35" fill="#3f7fe3"/></svg>
<div class="a" style="left:777.50px;transform-origin:0 0;transform:scaleX(0.8500);top:328.89px;font-size:5.2px;color:#4a4e59;font-weight:400;-webkit-text-stroke:0.06px #4a4e59;">1</div>
<div style="position:absolute;left:261.4px;top:370.3px;width:40.2px;height:14.3px;background:#fff;border:0.8px solid #e3e6ee;border-radius:2.5px;box-sizing:border-box"></div>
<svg style="position:absolute;left:266.60px;top:374.20px" width="7" height="6.4" viewBox="0 0 7 6.4"><path d="M0.4 3.2 H6.2 M3.6 0.6 L6.2 3.2 L3.6 5.8" fill="none" stroke="#1f232b" stroke-width="0.9"/></svg>
<div class="a" style="left:277.20px;transform-origin:0 0;top:375.91px;font-size:4.4px;color:#30343e;font-weight:400;-webkit-text-stroke:0.14px #30343e;">VIEW ALL</div>
<div style="position:absolute;left:121px;top:400px;width:798.4px;height:103px;background:#fff;border-radius:2px 2px 0 0"></div>
<div style="position:absolute;left:121px;top:400px;width:798.4px;height:22.7px;background:#f8f9fb;border-radius:2px 2px 0 0"></div>
<div class="a" style="left:127.00px;transform-origin:0 0;transform:scaleX(0.9263);top:406.77px;font-size:8.4px;color:#474b57;font-weight:400;">Google Business Profile</div>
<div style="position:absolute;left:520px;top:422.7px;width:0.8px;height:81px;background:#eef0f4"></div>
<div class="a" style="left:129.10px;transform-origin:0 0;transform:scaleX(0.9093);top:433.37px;font-size:4.65px;color:#30343e;font-weight:400;-webkit-text-stroke:0.06px #30343e;">VIEWS BY PLATFORM AND DEVICE</div>
<div class="a" style="left:202.20px;transform-origin:0 0;top:430.91px;font-size:4.4px;color:#30343e;font-weight:400;font-style:italic-webkit-text-stroke:0.06px #30343e;">i</div>
<svg style="position:absolute;left:0;top:0" width="924" height="503" viewBox="0 0 924 503"><path d="M164.00 445.70 A33.2 33.2 0 0 1 195.88 488.16" fill="none" stroke="#5ed062" stroke-width="3.6"/><path d="M195.88 488.16 A33.2 33.2 0 0 1 150.62 509.29" fill="none" stroke="#e5483b" stroke-width="3.6"/><path d="M150.62 509.29 A33.2 33.2 0 0 1 155.14 446.90" fill="none" stroke="#7b6cf2" stroke-width="3.6"/><path d="M155.14 446.90 A33.2 33.2 0 0 1 163.79 445.70" fill="none" stroke="#f2c30f" stroke-width="3.6"/></svg>
<div class="a" style="left:149.06px;transform-origin:50% 0;top:474.87px;font-size:8.4px;color:#2f6fd6;font-weight:400;-webkit-text-stroke:0.22px #2f6fd6;">214,538</div>
<svg style="position:absolute;left:212px;top:447.70px" width="8" height="8" viewBox="0 0 8 8"><circle cx="4.3" cy="4" r="1.45" fill="#5ed062"/></svg>
<div class="a" style="left:221.90px;transform-origin:0 0;transform:scaleX(0.9390);top:450.72px;font-size:4.65px;color:#30343e;font-weight:400;-webkit-text-stroke:0.06px #30343e;">MOBILE SEARCH VIEWS</div>
<div style="position:absolute;left:276.0px;top:451.55px;width:197.2px;height:0.6px;background:#eceef2"></div>
<div class="a" style="right:431.80px;transform-origin:100% 0;transform:scaleX(1.0268);top:451.29px;font-size:5.2px;color:#2f6fd6;font-weight:400;-webkit-text-stroke:0.06px #2f6fd6;">63,381</div>
<div class="a" style="right:412.30px;transform-origin:100% 0;transform:scaleX(1.0259);top:451.29px;font-size:5.2px;color:#7b7f89;font-weight:400;-webkit-text-stroke:0.06px #7b7f89;">29.5%</div>
<svg style="position:absolute;left:212px;top:463.30px" width="8" height="8" viewBox="0 0 8 8"><circle cx="4.3" cy="4" r="1.45" fill="#e5483b"/></svg>
<div class="a" style="left:221.90px;transform-origin:0 0;transform:scaleX(0.9578);top:466.32px;font-size:4.65px;color:#30343e;font-weight:400;-webkit-text-stroke:0.06px #30343e;">MOBILE MAPS VIEWS</div>
<div style="position:absolute;left:271.1px;top:467.15px;width:202.09999999999997px;height:0.6px;background:#eceef2"></div>
<div class="a" style="right:431.80px;transform-origin:100% 0;transform:scaleX(1.0268);top:466.89px;font-size:5.2px;color:#2f6fd6;font-weight:400;-webkit-text-stroke:0.06px #2f6fd6;">58,190</div>
<div class="a" style="right:412.30px;transform-origin:100% 0;transform:scaleX(1.0259);top:466.89px;font-size:5.2px;color:#7b7f89;font-weight:400;-webkit-text-stroke:0.06px #7b7f89;">27.1%</div>
<svg style="position:absolute;left:212px;top:478.90px" width="8" height="8" viewBox="0 0 8 8"><circle cx="4.3" cy="4" r="1.45" fill="#7b6cf2"/></svg>
<div class="a" style="left:221.90px;transform-origin:0 0;transform:scaleX(0.9339);top:481.92px;font-size:4.65px;color:#30343e;font-weight:400;-webkit-text-stroke:0.06px #30343e;">DESKTOP SEARCH VIEWS</div>
<div style="position:absolute;left:279.9px;top:482.75px;width:193.3px;height:0.6px;background:#eceef2"></div>
<div class="a" style="right:431.80px;transform-origin:100% 0;transform:scaleX(1.0268);top:482.49px;font-size:5.2px;color:#2f6fd6;font-weight:400;-webkit-text-stroke:0.06px #2f6fd6;">83,912</div>
<div class="a" style="right:412.30px;transform-origin:100% 0;transform:scaleX(1.0259);top:482.49px;font-size:5.2px;color:#7b7f89;font-weight:400;-webkit-text-stroke:0.06px #7b7f89;">39.1%</div>
<svg style="position:absolute;left:212px;top:494.50px" width="8" height="8" viewBox="0 0 8 8"><circle cx="4.3" cy="4" r="1.45" fill="#f2c30f"/></svg>
<div class="a" style="left:221.90px;transform-origin:0 0;transform:scaleX(0.9202);top:497.52px;font-size:4.65px;color:#30343e;font-weight:400;-webkit-text-stroke:0.06px #30343e;">DESKTOP MAPS VIEWS</div>
<div style="position:absolute;left:273.4px;top:498.35px;width:199.8px;height:0.6px;background:#eceef2"></div>
<div class="a" style="right:431.80px;transform-origin:100% 0;transform:scaleX(1.1090);top:498.09px;font-size:5.2px;color:#2f6fd6;font-weight:400;-webkit-text-stroke:0.06px #2f6fd6;">9,055</div>
<div class="a" style="right:412.30px;transform-origin:100% 0;transform:scaleX(1.0399);top:498.09px;font-size:5.2px;color:#7b7f89;font-weight:400;-webkit-text-stroke:0.06px #7b7f89;">4.2%</div>
<div class="a" style="left:529.10px;transform-origin:0 0;transform:scaleX(0.9103);top:437.87px;font-size:4.65px;color:#30343e;font-weight:400;-webkit-text-stroke:0.06px #30343e;">SEARCHES BY KEYWORDS</div>
<div class="a" style="left:587.50px;transform-origin:0 0;top:435.21px;font-size:4.4px;color:#30343e;font-weight:400;font-style:italic-webkit-text-stroke:0.06px #30343e;">i</div>
<div class="a" style="left:529.10px;transform-origin:0 0;transform:scaleX(0.9168);top:447.80px;font-size:7.85px;color:#2f6fd6;font-weight:400;-webkit-text-stroke:0.18px #2f6fd6;">163,761</div>
<div class="a" style="left:530.20px;transform-origin:0 0;transform:scaleX(0.9000);top:466.69px;font-size:5.2px;color:#7a7e88;font-weight:400;-webkit-text-stroke:0.06px #7a7e88;">1.</div>
<div class="a" style="left:541.80px;transform-origin:0 0;transform:scaleX(0.9925);top:465.50px;font-size:6.0px;color:#50545e;font-weight:400;">food</div>
<div style="position:absolute;left:556.9px;top:468.1px;width:334.70000000000005px;height:0.6px;background:#eef0f3"></div>
<div class="a" style="left:530.20px;transform-origin:0 0;transform:scaleX(0.9000);top:476.84px;font-size:5.2px;color:#7a7e88;font-weight:400;-webkit-text-stroke:0.06px #7a7e88;">2.</div>
<div class="a" style="left:541.80px;transform-origin:0 0;transform:scaleX(0.8715);top:475.65px;font-size:6.0px;color:#50545e;font-weight:400;">pasta</div>
<div style="position:absolute;left:558.0999999999999px;top:478.25px;width:333.5000000000001px;height:0.6px;background:#eef0f3"></div>
<div class="a" style="left:530.20px;transform-origin:0 0;transform:scaleX(0.9000);top:486.99px;font-size:5.2px;color:#7a7e88;font-weight:400;-webkit-text-stroke:0.06px #7a7e88;">3.</div>
<div class="a" style="left:541.80px;transform-origin:0 0;transform:scaleX(0.9307);top:485.80px;font-size:6.0px;color:#50545e;font-weight:400;">italian</div>
<div style="position:absolute;left:559.9px;top:488.4px;width:331.70000000000005px;height:0.6px;background:#eef0f3"></div>
<div class="a" style="right:14.30px;transform-origin:100% 0;transform:scaleX(1.1172);top:487.19px;font-size:5.2px;color:#2f333c;font-weight:400;-webkit-text-stroke:0.15px #2f333c;">5659</div>
<div style="position:absolute;left:894.7px;top:460.9px;width:23.2px;height:23.2px;border-radius:50%;background:#1a6fd3"></div>
<svg style="position:absolute;left:0;top:0" width="924" height="503" viewBox="0 0 924 503"><path d="M902.6 467.2 H910.6 Q912.6 467.2 912.6 469.2 V475" fill="none" stroke="#fff" stroke-width="0.75"/><path d="M902.2 468.4 H909.2 Q911.2 468.4 911.2 470.4 V475.2 Q911.2 477.2 909.2 477.2 H906.6 L905.6 478.6 L904.6 477.2 H902.2 Q900.2 477.2 900.2 475.2 V470.4 Q900.2 468.4 902.2 468.4 Z" fill="#fff"/></svg>
</body></html>
